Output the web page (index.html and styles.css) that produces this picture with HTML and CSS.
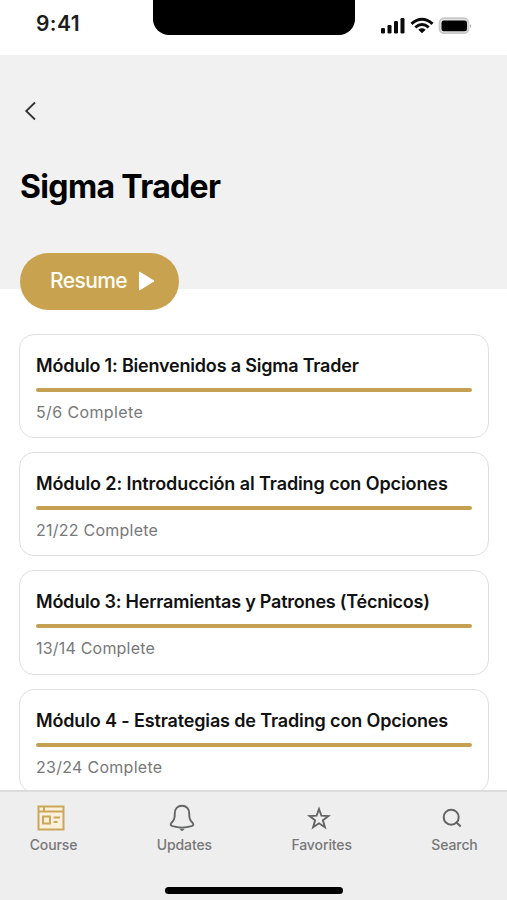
FILE: index.html
```html
<!DOCTYPE html>
<html lang="es">
<head>
<meta charset="utf-8">
<meta name="viewport" content="width=device-width, initial-scale=1">
<title>Sigma Trader</title>
<link rel="stylesheet" href="styles.css">
</head>
<body>
<div class="app">
  <header class="status">
    <span class="time">9:41</span>
    <div class="notch"></div>
    <svg class="indicators" width="92" height="20" viewBox="0 0 92 20">
      <g fill="#0b0b0b">
        <rect x="1" y="12" width="4" height="5.5" rx="1.3"/>
        <rect x="7.5" y="9" width="4" height="8.5" rx="1.3"/>
        <rect x="14" y="5" width="4" height="12.5" rx="1.3"/>
        <rect x="20.5" y="2" width="4" height="15.5" rx="1.3"/>
      </g>
      <g fill="none" stroke="#0b0b0b" stroke-width="2.9">
        <path d="M31.5 7.800Q42 -1.400 52.5 7.800"/>
        <path d="M35.3 11.400Q42 5.800 48.700 11.400"/>
      </g>
      <path d="M38.300 13.700Q42 11 45.700 13.700L42 17.300Z" fill="#0b0b0b"/>
      <rect x="59.500" y="2.200" width="29" height="15" rx="4.500" fill="#e2e2e2" stroke="#c9c9c9" stroke-width="1.800"/>
      <rect x="61.500" y="4.400" width="25.500" height="10.800" rx="2.500" fill="#000"/>
      <path d="M90 8Q92.500 10 90 12Z" fill="#b5b5b5"/>
    </svg>
  </header>

  <section class="hero">
    <svg class="back" width="14" height="20" viewBox="0 0 14 20"><path d="M11 1.500 2.200 10 11 18.500"/></svg>
    <h1>Sigma Trader</h1>
    <button class="resume"><span>Resume</span><svg width="18" height="22" viewBox="0 0 18 22"><path d="M2.500 2 17 11 2.500 20Z"/></svg></button>
  </section>

  <main class="modules">
    <article class="card"><h2 class="m1">Módulo 1: Bienvenidos a Sigma Trader</h2><div class="bar"></div><p class="p1">5/6 Complete</p></article>
    <article class="card"><h2 class="m2">Módulo 2: Introducción al Trading con Opciones</h2><div class="bar"></div><p class="p2">21/22 Complete</p></article>
    <article class="card"><h2 class="m3">Módulo 3: Herramientas y Patrones (Técnicos)</h2><div class="bar"></div><p class="p3">13/14 Complete</p></article>
    <article class="card"><h2 class="m4">Módulo 4 - Estrategias de Trading con Opciones</h2><div class="bar"></div><p class="p4">23/24 Complete</p></article>
  </main>

  <nav class="dock">
    <div class="tabs">
      <div class="tab course">
        <svg width="30" height="30" viewBox="0 0 30 30" fill="#faf0dc" stroke="#cba75a" stroke-width="2"><path d="M2.500 3.500H27.500V26.500H2.500Z"/><path d="M2.500 8.500H27.500M8 3.500V8.500"/><path d="M7 13.500H14V20.500H7Z"/><path d="M17.500 14.500H24M17.500 19H21.500"/></svg>
        <span>Course</span>
      </div>
      <div class="tab updates">
        <svg width="30" height="30" viewBox="0 0 30 30" fill="none" stroke="#636466" stroke-width="1.900" stroke-linejoin="round"><path d="M15 2.800C10.500 2.800 7.800 6 7.800 10.500C7.800 16 6.800 17.500 4.300 20Q2.600 22 5.500 23.200Q15 26 24.500 23.200Q27.400 22 25.700 20C23.200 17.500 22.200 16 22.200 10.500C22.200 6 19.500 2.800 15 2.800Z"/><path d="M12.300 25.800Q15 30 17.700 25.800Z" fill="#636466" stroke="none"/></svg>
        <span>Updates</span>
      </div>
      <div class="tab favorites">
        <svg width="30" height="30" viewBox="0 0 30 30" fill="none" stroke="#636466" stroke-width="1.900"><path d="M15 6 17.400 12.700 24.400 13 18.900 17.300 20.900 24.200 15 20.300 9.100 24.200 11.100 17.300 5.600 13 12.600 12.700Z"/></svg>
        <span>Favorites</span>
      </div>
      <div class="tab search">
        <svg width="30" height="30" viewBox="0 0 30 30" fill="none" stroke="#636466" stroke-width="2"><circle cx="14.200" cy="14.200" r="7.500"/><path d="M19.500 19.500 23.700 23.500"/></svg>
        <span>Search</span>
      </div>
    </div>
    <div class="home"></div>
  </nav>
</div>
</body>
</html>
```

FILE: styles.css
```css
* { box-sizing: border-box; }
body { margin: 0; background: #fff; font-family: Inter, "Liberation Sans", sans-serif; }
h1, h2, p { margin: 0; white-space: nowrap; }
svg { display: block; flex: none; }
.app { height: 900px; display: flex; flex-direction: column; overflow: hidden; }

.status { flex: none; height: 55px; display: flex; align-items: flex-start; }
.time { width: 152.500px; padding: 10px 0 0 36px; font-size: 21px; line-height: 28px; font-weight: 600; letter-spacing: 0.4px; color: #1c1c1c; }
.notch { width: 202.500px; height: 35px; background: #000; border-radius: 0 0 16px 16px; }
.indicators { margin: 16px 0 0 25px; }

.hero { flex: none; height: 233.500px; background: #f1f1f1; padding: 46px 20px 0; display: flex; flex-direction: column; align-items: flex-start; }
.back { margin-left: 4px; fill: none; stroke: #333; stroke-width: 1.8; }
h1 { margin-top: 46px; font-size: 32px; line-height: 40px; font-weight: 700; letter-spacing: -0.65px; color: #000; }
.resume { flex: none; margin-top: 45.500px; width: 159px; height: 57.500px; padding: 0 0 0 30px; border: 0; border-radius: 29px; background: #c8a24e; color: #fffdf5; display: flex; align-items: center; gap: 10px; font: 500 21px/28px Inter, sans-serif; letter-spacing: -0.6px; }
.resume span { width: 77px; }
.resume path { fill: #fff; stroke: #fff; stroke-width: 1; stroke-linejoin: round; }

.modules { flex: 1; min-height: 0; overflow: hidden; padding: 45.500px 18px 0 19px; display: flex; flex-direction: column; gap: 14px; }
.card { flex: none; height: 104.200px; border: 1px solid #dfdfdf; border-radius: 15px; padding: 18px 16px 0; }
h2 { font-size: 18px; line-height: 26px; font-weight: 600; color: #111; }
.m1 { letter-spacing: -0.2px; }
.m2 { letter-spacing: -0.1px; }
.m3 { letter-spacing: -0.22px; }
.m4 { letter-spacing: -0.14px; }
.bar { margin-top: 9px; height: 4px; border-radius: 2px; background: #c4a050; }
.card p { margin-top: 8px; font-size: 16px; line-height: 24px; color: #77787a; }
.card .p1 { letter-spacing: 0.38px; }
.card .p2 { letter-spacing: 0.24px; }
.card .p3 { letter-spacing: 0.2px; }
.card .p4 { letter-spacing: 0.28px; }

.dock { flex: none; height: 110px; background: #eee; border-top: 2px solid #dcdcdc; padding-top: 11px; }
.tabs { display: flex; justify-content: space-between; padding: 0 30px; }
.tab { display: flex; flex-direction: column; align-items: center; font-size: 14px; line-height: 20px; font-weight: 500; letter-spacing: -0.1px; color: #77787a; white-space: nowrap; }
.tab svg { margin: 0 5px 2px 0; }
.course { width: 47px; }
.updates { width: 54px; }
.favorites { width: 60px; }
.search { width: 45px; }
.home { width: 178px; height: 7px; margin: 32px auto 0; border-radius: 4px; background: #000; }
```
